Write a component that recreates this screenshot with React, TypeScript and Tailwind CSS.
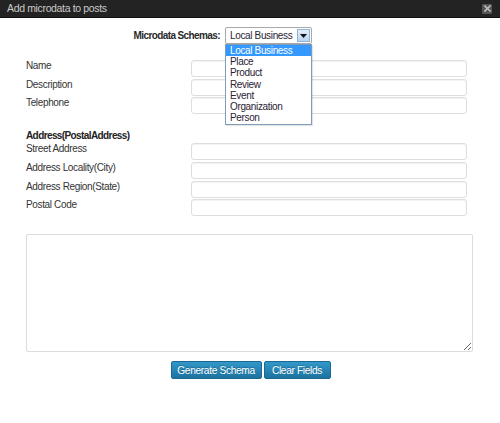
import * as React from "react";

const font = "font-['Liberation_Sans',Arial,sans-serif]";

const schemas = [
  "Local Business",
  "Place",
  "Product",
  "Review",
  "Event",
  "Organization",
  "Person",
];

function Field({ label }: { label: string }) {
  return (
    <div className="flex">
      <div className="w-[165px] shrink-0 leading-[12px] text-[#333]">
        {label}
      </div>
      <div className="h-[17px] w-[276px] rounded-[3px] border border-[#dedede] bg-white shadow-[inset_0_1px_1px_rgba(0,0,0,0.05)]" />
    </div>
  );
}

export default function App() {
  const [selected] = React.useState("Local Business");

  return (
    <div
      className={`relative h-[423px] w-[500px] overflow-hidden bg-white text-[10px] tracking-[-0.35px] ${font}`}
    >
      {/* title bar */}
      <div className="flex h-[18px] items-center justify-between border-b border-[#111] bg-[#232323] pl-[7px] pr-[8px]">
        <span className="text-[10.5px] text-[#c9c9c9]">Add microdata to posts</span>
        <button className="flex h-[10px] w-[10px] items-center justify-center rounded-[1px] bg-[#555]">
          <svg width="7" height="7" viewBox="0 0 7 7">
            <path
              d="M1 1 L6 6 M6 1 L1 6"
              stroke="#bdbdbd"
              strokeWidth="1.6"
              strokeLinecap="square"
            />
          </svg>
        </button>
      </div>

      {/* schema select */}
      <div className="mt-[9px] flex items-center">
        <span className="w-[221px] whitespace-nowrap pr-[1px] text-right font-bold tracking-[-0.6px] text-[#2a2a2a]">
          Microdata Schemas:
        </span>
        <div className="relative ml-[4px]">
          <div className="flex h-[17px] w-[87px] items-center justify-between rounded-[2px] border border-[#a9a9a9] bg-white pl-[4px] pr-[1px] text-[#2a2233]">
            <span>{selected}</span>
            <span className="flex h-[13px] w-[13px] items-center justify-center border border-[#8fb2d8] bg-gradient-to-b from-[#e3eefa] to-[#bcd5ee]">
              <svg width="7" height="4" viewBox="0 0 7 4">
                <path d="M0 0 H7 L3.5 4 Z" fill="#111" />
              </svg>
            </span>
          </div>
          <ul className="absolute left-0 top-[17px] z-10 w-[87px] border border-[#7f9db9] bg-white pb-[1px] shadow-[1px_1px_1px_rgba(0,0,0,0.1)]">
            {schemas.map((s) => (
              <li
                key={s}
                className={`h-[11.2px] pl-[4px] leading-[11px] ${
                  s === selected ? "bg-[#3399ff] text-white" : "text-[#2a2233]"
                }`}
              >
                {s}
              </li>
            ))}
          </ul>
        </div>
      </div>

      {/* fields */}
      <div className="pl-[26px]">
        <div className="mt-[16px] flex flex-col gap-[1.7px]">
          <Field label="Name" />
          <Field label="Description" />
          <Field label="Telephone" />
        </div>

        <div className="mt-[17px] font-bold leading-[10px] tracking-[-0.6px] text-[#222]">
          Address(PostalAddress)
        </div>
        <div className="mt-[2px] flex flex-col gap-[1.7px]">
          <Field label="Street Address" />
          <Field label="Address Locality(City)" />
          <Field label="Address Region(State)" />
          <Field label="Postal Code" />
        </div>

        <textarea className="mt-[18px] block h-[118px] w-[447px] rounded-[2px] border border-[#dcdcdc] bg-white outline-none" />
      </div>

      {/* actions */}
      <div className="mt-[9px] flex justify-center gap-[2px] pl-[1px]">
        <button className="h-[18px] w-[91px] rounded-[2px] border border-[#1b6991] bg-gradient-to-b from-[#3298c9] to-[#1c73a0] text-[10.2px] text-white [text-shadow:0_-1px_0_rgba(0,0,0,0.25)]">
          Generate Schema
        </button>
        <button className="h-[18px] w-[67px] rounded-[2px] border border-[#1b6991] bg-gradient-to-b from-[#3298c9] to-[#1c73a0] text-[10.2px] text-white [text-shadow:0_-1px_0_rgba(0,0,0,0.25)]">
          Clear Fields
        </button>
      </div>
    </div>
  );
}
